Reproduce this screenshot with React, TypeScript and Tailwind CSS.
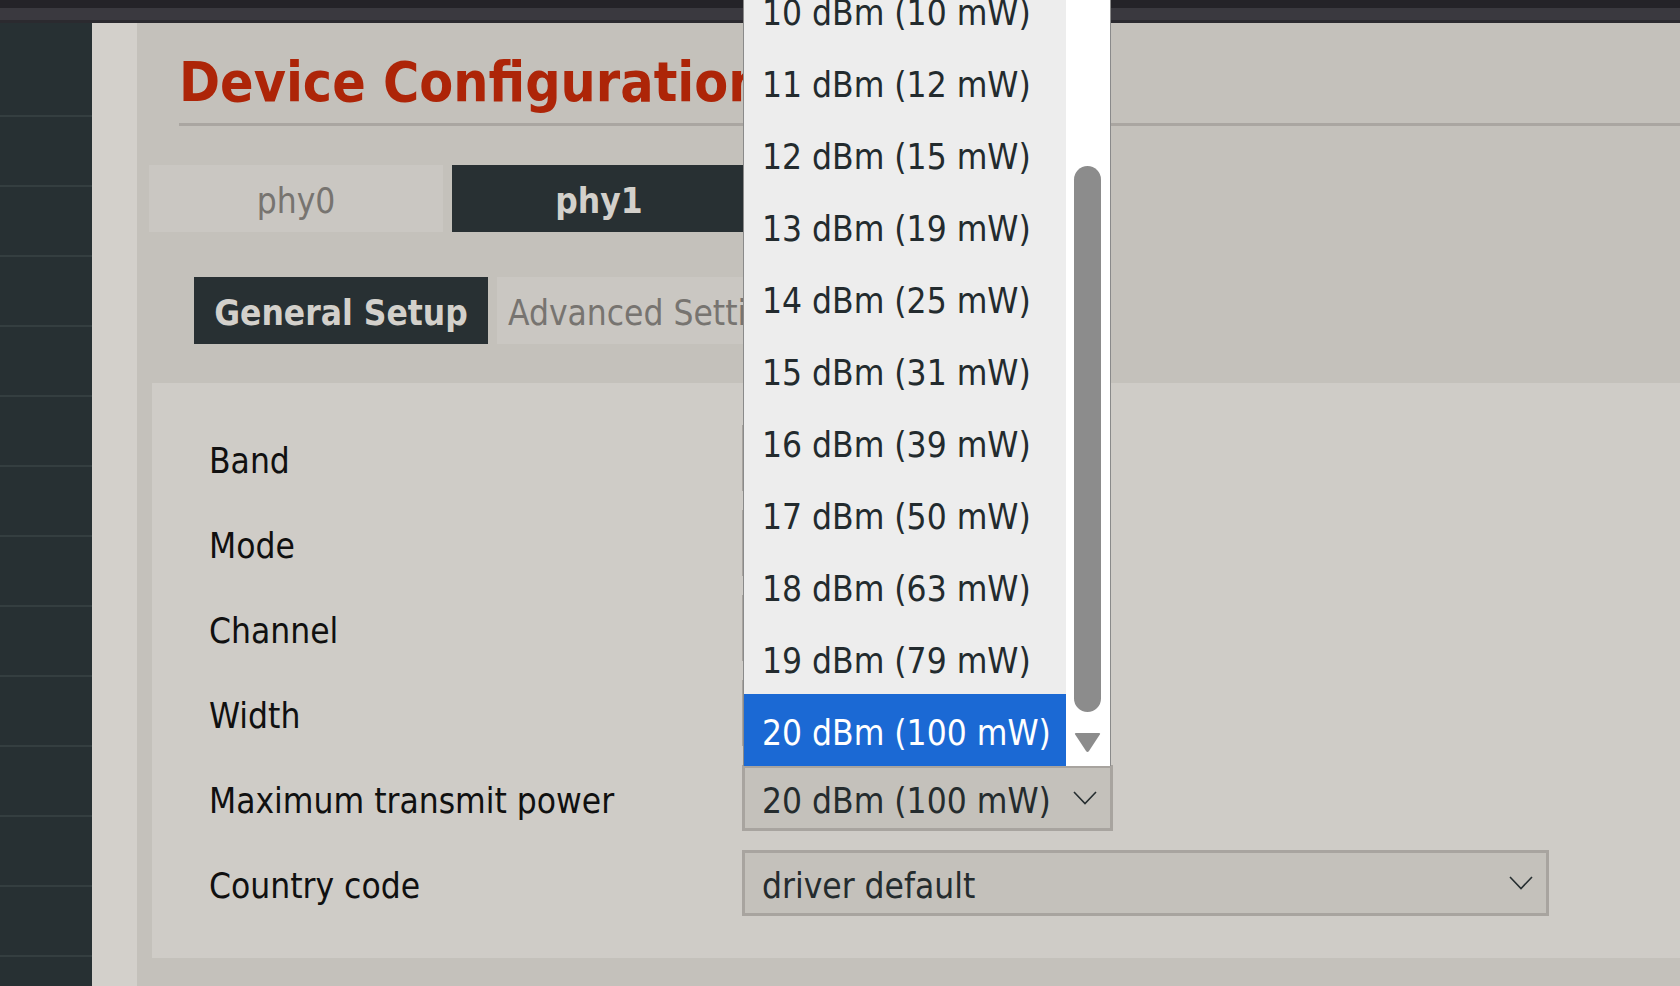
import React from 'react'

const font = "font-['DejaVu_Sans_Condensed','DejaVu_Sans',sans-serif]"

const rows = [
  { label: 'Band', value: '', w: 'w-[366px]' },
  { label: 'Mode', value: '', w: 'w-[366px]' },
  { label: 'Channel', value: '', w: 'w-[366px]' },
  { label: 'Width', value: '', w: 'w-[366px]' },
  { label: 'Maximum transmit power', value: '20 dBm (100 mW)', w: 'w-[371px]' },
  { label: 'Country code', value: 'driver default', w: 'w-[807px]' },
]

const options = [
  '10 dBm (10 mW)',
  '11 dBm (12 mW)',
  '12 dBm (15 mW)',
  '13 dBm (19 mW)',
  '14 dBm (25 mW)',
  '15 dBm (31 mW)',
  '16 dBm (39 mW)',
  '17 dBm (50 mW)',
  '18 dBm (63 mW)',
  '19 dBm (79 mW)',
  '20 dBm (100 mW)',
]

function Chevron() {
  return (
    <svg width="24" height="14" viewBox="0 0 24 14" className="shrink-0">
      <polyline points="1,1 12,12.5 23,1" fill="none" stroke="#262e30" strokeWidth="1.6" />
    </svg>
  )
}

function Select({ value, w }: { value: string; w: string }) {
  return (
    <div
      className={`${w} flex h-[66px] items-center justify-between border-[3px] border-[#a8a49f] bg-[#c4c1bb] pl-[17px] pr-[13px] pt-[6px] text-[35px] text-[#252c2e]`}
    >
      <span className="leading-none">{value}</span>
      {value && <div className="-mt-[6px]"><Chevron /></div>}
    </div>
  )
}

export default function App() {
  return (
    <div className={`relative flex h-[986px] w-[1680px] flex-col overflow-hidden bg-[#c4c1bb] ${font}`}>
      {/* window top bar */}
      <div className="h-[8px] shrink-0 bg-[#242328]" />
      <div className="h-[12px] shrink-0 bg-[#3a393f]" />
      <div className="h-[3px] shrink-0 bg-[#2b2a2f]" />

      <div className="flex min-h-0 flex-1">
        {/* sidebar */}
        <div className="flex w-[92px] shrink-0 flex-col bg-[#273033]">
          <div className="h-[94px] shrink-0 border-b-2 border-[#343e40]" />
          {Array.from({ length: 13 }).map((_, i) => (
            <div key={i} className="h-[70px] shrink-0 border-b-2 border-[#343e40]" />
          ))}
        </div>
        <div className="w-[45px] shrink-0 bg-[#d3d0cb]" />

        {/* main */}
        <div className="flex min-w-0 flex-1 flex-col pl-[12px]">
          <div className="ml-[30px] mt-[27px] border-b-[3px] border-[#aaa6a1] pb-[9px]">
            <h1 className="whitespace-nowrap text-[55px] font-bold leading-[64px] text-[#ad2508]">
              Device Configuration
            </h1>
          </div>

          <div className="mt-[39px] flex gap-[9px]">
            <div className="flex h-[67px] w-[294px] items-center justify-center bg-[#cac7c2] pt-[6px] text-[35px] text-[#777470]">
              phy0
            </div>
            <div className="flex h-[67px] w-[294px] items-center justify-center bg-[#283033] pt-[6px] text-[35px] font-bold text-[#d3d0cb]">
              phy1
            </div>
          </div>

          <div className="ml-[45px] mt-[45px] flex gap-[9px]">
            <div className="flex h-[67px] w-[294px] items-center justify-center bg-[#283033] pt-[6px] text-[35px] font-bold text-[#d3d0cb]">
              General Setup
            </div>
            <div className="flex h-[67px] items-center whitespace-nowrap bg-[#cac7c2] px-[11px] pt-[6px] text-[35px] text-[#777470]">
              Advanced Settings
            </div>
          </div>

          <div className="ml-[3px] mt-[39px] flex flex-col gap-[19px] bg-[#cfccc7] py-[42px] pl-[57px]">
            {rows.map((r) => (
              <div key={r.label} className="flex h-[66px] items-center">
                <div className="w-[533px] shrink-0 pt-[6px] text-[35px] text-[#101010]">{r.label}</div>
                <Select value={r.value} w={r.w} />
              </div>
            ))}
          </div>
        </div>
      </div>

      {/* open dropdown list */}
      <div className="absolute left-[743px] top-0 flex h-[766px] w-[368px] border-x border-[#8a8a8a] bg-white">
        <div className="flex w-[322px] flex-col justify-end overflow-hidden bg-[#ededed]">
          {options.map((o) => {
            const sel = o === '20 dBm (100 mW)'
            return (
              <div
                key={o}
                className={`flex h-[72px] shrink-0 items-center whitespace-nowrap pl-[18px] pt-[6px] text-[35px] ${
                  sel ? 'bg-[#1b69d4] text-white' : 'text-[#232b2e]'
                }`}
              >
                {o}
              </div>
            )
          })}
        </div>
        <div className="relative flex-1 bg-white">
          <div className="absolute left-[8px] top-[166px] h-[546px] w-[27px] rounded-full bg-[#8c8c8c]" />
          <svg className="absolute left-[8px] top-[732px]" width="27" height="21" viewBox="0 0 27 21">
            <path d="M2 1 H25 Q27 1 25.5 3 L15 19 Q13.5 21 12 19 L1.5 3 Q0 1 2 1 Z" fill="#8c8c8c" />
          </svg>
        </div>
      </div>
    </div>
  )
}
